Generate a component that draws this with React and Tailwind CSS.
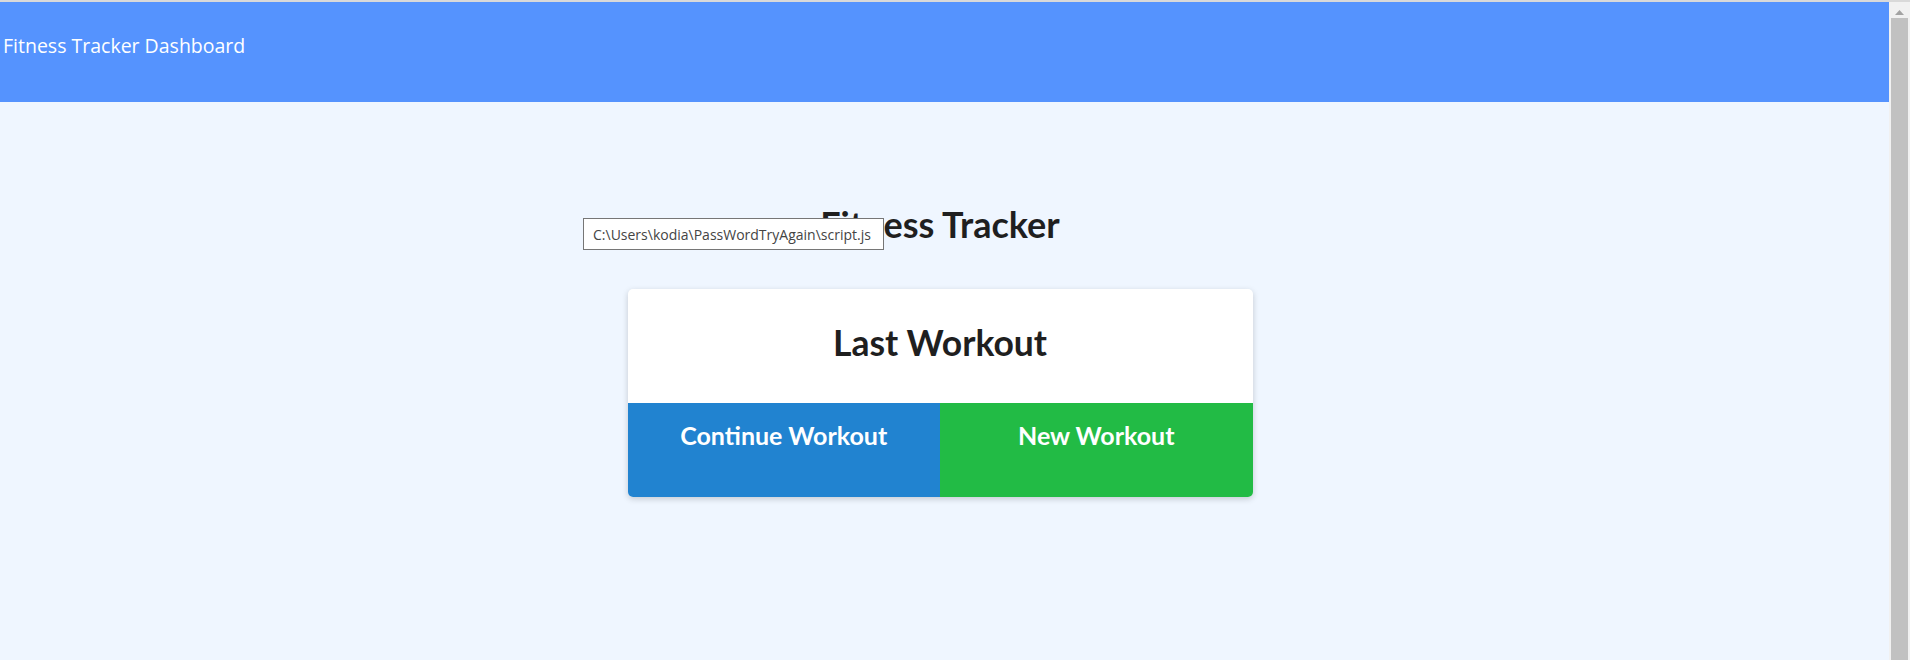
import { useState } from 'react'

const WorkoutCard = () => {
  return (
    <div className="mx-auto mt-[43px] w-[625px] overflow-hidden rounded-[5px] bg-white shadow-[0_2px_6px_rgba(0,0,0,0.18)]">
      <div className="h-[114px] pt-[33px] text-center">
        <h2 className="text-[35.5px] font-bold leading-[1.2] text-[#1f1f1f]">Last Workout</h2>
      </div>
      <div className="grid h-[94px] grid-cols-2">
        <button className="flex items-start justify-center bg-[#2183d0] pt-[17px] text-[25px] font-bold leading-[1.2] text-white">
          Continue Workout
        </button>
        <button className="flex items-start justify-center bg-[#22bb45] pt-[17px] text-[25px] font-bold leading-[1.2] text-white">
          New Workout
        </button>
      </div>
    </div>
  )
}

const App = () => {
  const [hover] = useState(true)

  return (
    <div className="relative flex h-[660px] flex-col overflow-hidden bg-[#eff6ff] font-['Lato',sans-serif]">
      <div className="h-[2px] bg-[#d9d9d9]" />
      <div className="flex flex-1">
        <div className="flex-1">
          {/* Header */}
          <header className="h-[100px] bg-[#5593fe] pl-[3px] pt-[30px]">
            <span className="font-['Open_Sans',sans-serif] text-[19.5px] leading-[28px] text-white">
              Fitness Tracker Dashboard
            </span>
          </header>

          {/* Main */}
          <main className="pr-[9px]">
            <h1 className="mt-[101px] text-center text-[36px] font-bold leading-[1.2] text-[#1f1f1f]">
              Fitness Tracker
            </h1>
            <WorkoutCard />
          </main>
        </div>

        {/* Scrollbar */}
        <div className="flex w-[21px] flex-col items-center bg-[#f1f1f1]">
          <svg width="9" height="5" viewBox="0 0 9 5" className="mt-[8px]">
            <polygon points="4.5,0 9,5 0,5" fill="#a3a3a3" />
          </svg>
          <div className="mt-[3px] w-[17px] flex-1 bg-[#c1c1c1]" />
        </div>
      </div>

      {/* Tooltip */}
      {hover && (
        <div className="absolute left-[583px] top-[218px] flex h-[32px] w-[301px] items-center border border-[#767676] bg-white pl-[9px] font-['Open_Sans',sans-serif] text-[14px] text-[#444]">
          C:\Users\kodia\PassWordTryAgain\script.js
        </div>
      )}
    </div>
  )
}

export default App
